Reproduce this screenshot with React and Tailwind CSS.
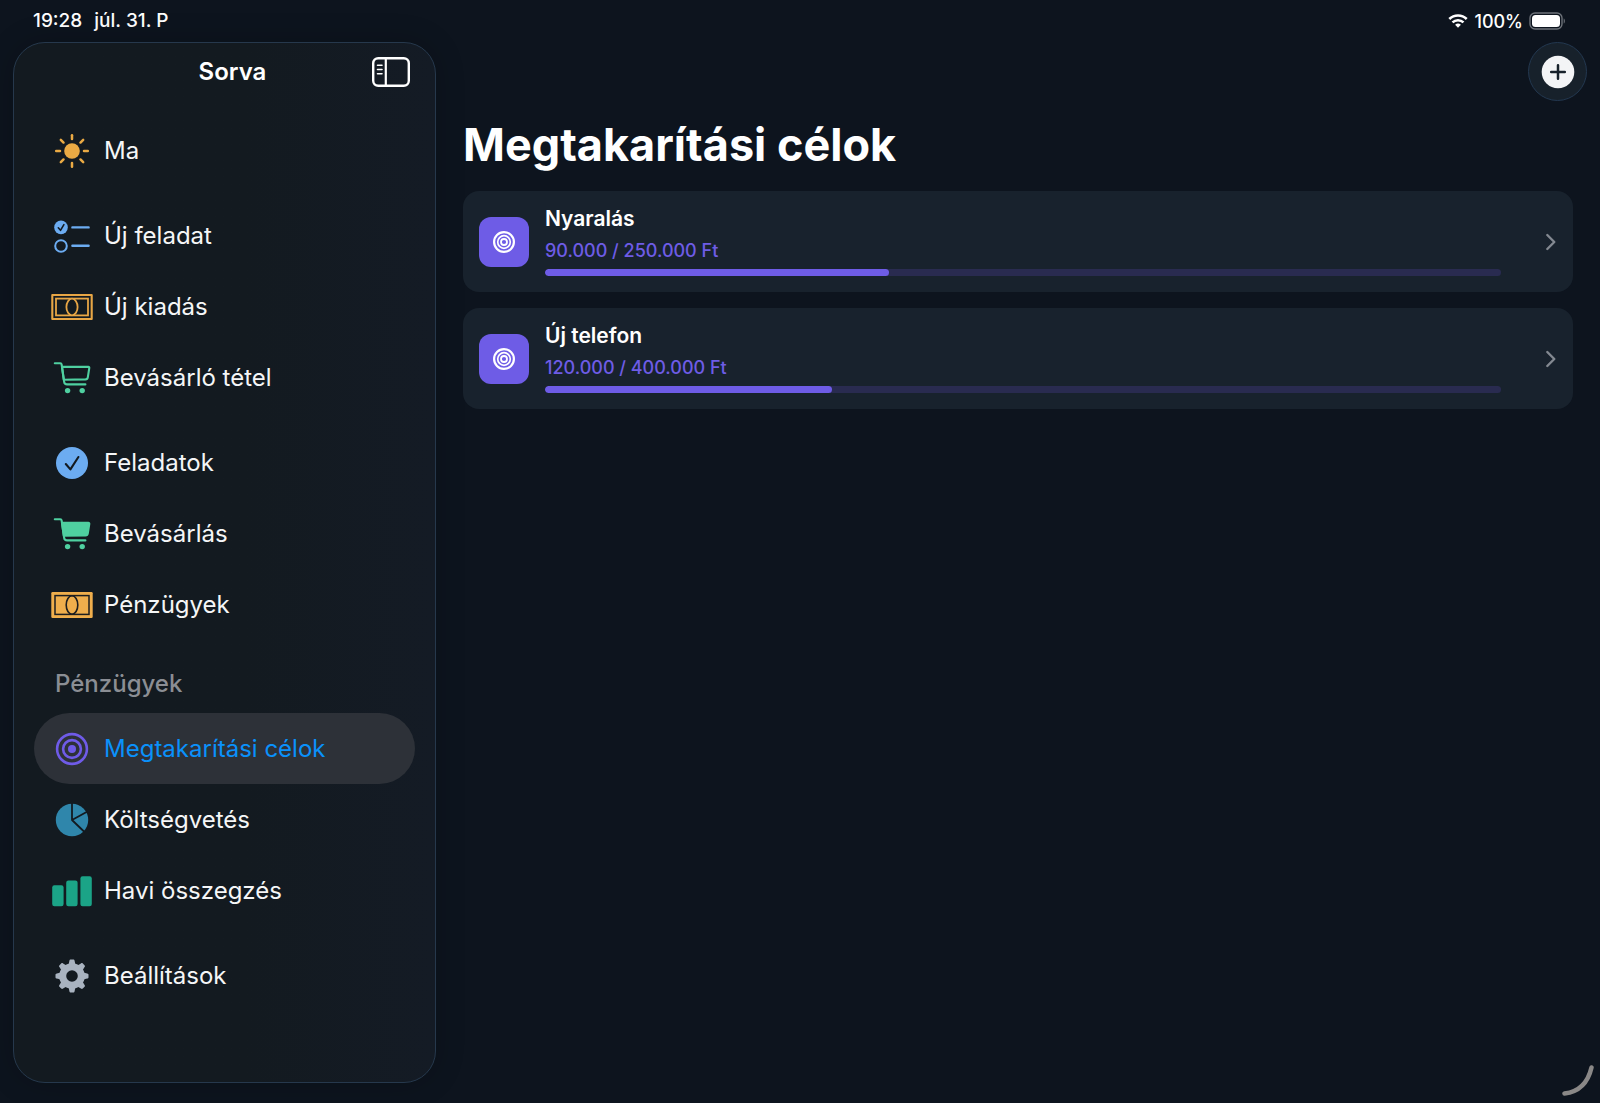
import React from "react";

function Icon({ children, className = "h-10 w-11" }) {
  return (
    <svg viewBox="0 0 44 40" fill="none" aria-hidden="true" className={className} strokeLinecap="round" strokeLinejoin="round">
      {children}
    </svg>
  );
}

function SunIcon() {
  return (
    <Icon>
      <circle cx="22" cy="20" r="7.8" fill="#eaaa44" />
      {[0, 45, 90, 135, 180, 225, 270, 315].map((a) => (
        <path key={a} d="M22 4.2V8" stroke="#eaaa44" strokeWidth="2.5" transform={`rotate(${a} 22 20)`} />
      ))}
    </Icon>
  );
}

function ChecklistIcon() {
  return (
    <Icon>
      <circle cx="11" cy="11.4" r="6.8" fill="#6cacf1" />
      <path d="M8.3 11.8l2.2 2.5 3.4-5.6" stroke="#131a20" strokeWidth="1.6" />
      <circle cx="11" cy="30" r="5.8" stroke="#6cacf1" strokeWidth="2" />
      <path d="M22.4 11.4h16.2M22.4 29.8h16.2" stroke="#6cacf1" strokeWidth="2.4" />
    </Icon>
  );
}

function BanknoteIcon({ filled }) {
  return (
    <Icon>
      {filled ? (
        <>
          <rect x="1.3" y="7" width="41.4" height="26" rx="1.2" fill="#efae4c" />
          <rect x="5" y="10.6" width="34" height="18.8" stroke="#1d1e1f" strokeWidth="1.5" strokeLinejoin="miter" />
          <ellipse cx="22" cy="20" rx="5.8" ry="9.2" stroke="#1d1e1f" strokeWidth="1.6" />
        </>
      ) : (
        <>
          <rect x="2.3" y="8" width="39.4" height="24" stroke="#e8a645" strokeWidth="2.1" />
          <rect x="6" y="11.6" width="32" height="16.8" stroke="#e8a645" strokeWidth="1.8" strokeLinejoin="miter" />
          <ellipse cx="22" cy="20" rx="5.6" ry="8.3" fill="#131a20" stroke="#e8a645" strokeWidth="1.8" />
        </>
      )}
    </Icon>
  );
}

function CartIcon({ filled }) {
  return (
    <Icon>
      <path
        d="M4.8 5.2h5.4c.9 0 1.3.4 1.4 1.2l2.5 17.2c.2 1.8 1.1 2.8 3 2.8h18.3"
        stroke="#4fd0a0"
        strokeWidth="2.1"
      />
      <path
        d="M12 8.9h26.4c.7 0 1 .4.9 1l-1.5 9.4c-.2 1.3-.9 2-2.3 2.1l-21.7 .3z"
        fill={filled ? "#4fd0a0" : "none"}
        stroke="#4fd0a0"
        strokeWidth="2.1"
      />
      <circle cx="17.6" cy="32.6" r="2.7" fill="#4fd0a0" />
      <circle cx="32.2" cy="32.6" r="2.7" fill="#4fd0a0" />
    </Icon>
  );
}

function CheckCircleIcon() {
  return (
    <Icon>
      <circle cx="22" cy="20" r="16" fill="#6cacf1" />
      <path d="M15.8 21l4.6 5.4 8-12.4" stroke="#131a20" strokeWidth="2.1" />
    </Icon>
  );
}

function TargetIcon() {
  return (
    <Icon>
      <circle cx="22" cy="20" r="14.9" stroke="#6f5be8" strokeWidth="2.6" />
      <circle cx="22" cy="20" r="8.9" stroke="#6f5be8" strokeWidth="2.6" />
      <circle cx="22" cy="20" r="4" fill="#6f5be8" />
    </Icon>
  );
}

function PieIcon() {
  return (
    <Icon>
      <circle cx="22" cy="20" r="16.2" fill="#2f86ab" />
      <path d="M22 3v17L34.5 32M22 20l15.5-8.5" stroke="#131a20" strokeWidth="1.8" strokeLinecap="butt" />
    </Icon>
  );
}

function BarsIcon() {
  return (
    <Icon>
      <rect x="2.2" y="14.2" width="11.4" height="21" rx="2.2" fill="#1ba487" />
      <rect x="16.2" y="9.6" width="11.4" height="25.6" rx="2.2" fill="#1ba487" />
      <rect x="30.4" y="5.2" width="11.4" height="30" rx="2.2" fill="#1ba487" />
    </Icon>
  );
}

function GearIcon() {
  return (
    <Icon>
      <circle cx="22" cy="20" r="9.3" stroke="#a9b3c0" strokeWidth="7" />
      {[0, 45, 90, 135, 180, 225, 270, 315].map((a) => (
        <path
          key={a}
          d="M17 9.5l1.8-1.7 .6-3c.1-.8.6-1.3 1.4-1.3h2.4c.8 0 1.3.5 1.4 1.3l.6 3 1.8 1.7z"
          fill="#a9b3c0"
          transform={`rotate(${a} 22 20)`}
        />
      ))}
    </Icon>
  );
}

function GoalGlyph() {
  return (
    <svg viewBox="0 0 24 24" fill="none" stroke="#fff" aria-hidden="true" className="size-6">
      <circle cx="12" cy="12" r="9.9" strokeWidth="2.2" />
      <circle cx="12" cy="12" r="6.3" strokeWidth="1.7" />
      <circle cx="12" cy="12" r="3" strokeWidth="1.8" />
    </svg>
  );
}

const groups = [
  { id: "today", items: [{ label: "Ma", icon: <SunIcon /> }] },
  {
    id: "create",
    items: [
      { label: "Új feladat", icon: <ChecklistIcon /> },
      { label: "Új kiadás", icon: <BanknoteIcon /> },
      { label: "Bevásárló tétel", icon: <CartIcon /> },
    ],
  },
  {
    id: "areas",
    items: [
      { label: "Feladatok", icon: <CheckCircleIcon /> },
      { label: "Bevásárlás", icon: <CartIcon filled /> },
      { label: "Pénzügyek", icon: <BanknoteIcon filled /> },
    ],
  },
  {
    id: "finance",
    title: "Pénzügyek",
    items: [
      { label: "Megtakarítási célok", icon: <TargetIcon />, active: true },
      { label: "Költségvetés", icon: <PieIcon /> },
      { label: "Havi összegzés", icon: <BarsIcon /> },
    ],
  },
  { id: "settings", items: [{ label: "Beállítások", icon: <GearIcon /> }] },
];

const goals = [
  { name: "Nyaralás", amount: "90.000 / 250.000 Ft", percent: 36 },
  { name: "Új telefon", amount: "120.000 / 400.000 Ft", percent: 30 },
];

function NavItem({ label, icon, active }) {
  return (
    <li>
      <a
        href="#"
        aria-current={active ? "page" : undefined}
        className={
          "flex h-[71px] items-center gap-2.5 rounded-[36px] pl-4 text-[24px] " +
          (active ? "bg-[#2d3138] text-[#0a91fb]" : "text-[#f5f6f7]")
        }
      >
        {icon}
        <span>{label}</span>
      </a>
    </li>
  );
}

function StatusBar() {
  return (
    <div className="flex h-[42px] items-center justify-between pr-[34px] pl-[33px] font-medium">
      <div className="flex gap-3 text-[19px]">
        <span>19:28</span>
        <span>júl. 31. P</span>
      </div>
      <div className="flex items-center gap-1.5 text-[18px]">
        <svg viewBox="0 0 20 16" fill="none" stroke="#fff" aria-hidden="true" className="h-4 w-5">
          <path d="M1.3 6a12.4 12.4 0 0 1 17.4 0" strokeWidth="2.6" />
          <path d="M4.5 9.4a7.8 7.8 0 0 1 11 0" strokeWidth="2.5" />
          <path d="M10 14.8l-2.9-3a4.2 4.2 0 0 1 5.800 0z" fill="#fff" stroke="none" />
        </svg>
        <span>100%</span>
        <svg viewBox="0 0 37 18" fill="none" aria-hidden="true" className="h-[18px] w-[37px]">
          <rect x="1" y="1" width="32" height="16" rx="5" stroke="#6d7279" strokeWidth="1.4" />
          <rect x="3" y="3" width="28" height="12" rx="3.5" fill="#fff" />
          <path d="M34.7 6.5v5c1.6-.6 1.6-4.4 0-5z" fill="#6d7279" />
        </svg>
      </div>
    </div>
  );
}

function Sidebar() {
  return (
    <aside className="flex w-[423px] shrink-0 flex-col rounded-[32px] border border-[#26384c] bg-linear-to-r from-[#131a20] from-55% to-[#141b25] px-5 shadow-[0_0_30px_rgba(0,0,0,0.2)]">
      <div className="grid h-[72px] grid-cols-[1fr_auto_1fr] items-start pt-3.5">
        <h2 className="col-start-2 pl-4 text-[24px] leading-[30px] font-semibold">Sorva</h2>
        <button type="button" aria-label="Oldalsáv elrejtése" className="mr-1 justify-self-end">
          <svg viewBox="0 0 40 30" fill="none" stroke="#fff" aria-hidden="true" className="h-[30px] w-10">
            <rect x="2.200" y="1.200" width="35.600" height="27.600" rx="5" strokeWidth="2.400" />
            <path d="M14.800 1v28" strokeWidth="2.200" />
            <path d="M6.500 8.200h4.500M6.500 12.500h4.500M6.500 16.700h4.500" strokeWidth="1.600" strokeLinecap="round" />
          </svg>
        </button>
      </div>
      <nav className="flex flex-col gap-3.5">
        {groups.map((group) => (
          <section key={group.id}>
            {group.title && (
              <h3 className="flex h-[59px] items-center pl-[21px] text-[24px] font-medium text-[#8b8e94]">{group.title}</h3>
            )}
            <ul>
              {group.items.map((item) => (
                <NavItem key={item.label} {...item} />
              ))}
            </ul>
          </section>
        ))}
      </nav>
    </aside>
  );
}

function GoalCard({ name, amount, percent }) {
  return (
    <li>
      <a href="#" className="flex h-[101px] items-center rounded-2xl bg-[#18222d] px-4">
        <span className="flex size-[50px] shrink-0 items-center justify-center rounded-xl bg-[#6e5ce6]">
          <GoalGlyph />
        </span>
        <span className="ml-4 flex flex-1 flex-col pb-1">
          <span className="text-[21px] leading-8 font-semibold">{name}</span>
          <span className="text-[18px] leading-8 font-medium text-[#6e5ce6]">{amount}</span>
          <span
            role="progressbar"
            aria-label={name}
            aria-valuenow={percent}
            aria-valuemin={0}
            aria-valuemax={100}
            className="mt-0.5 block h-[7px] overflow-hidden rounded-full bg-[#292b50]"
          >
            <span className="block h-full rounded-full bg-[#6e5ce6]" style={{ width: `${percent}%` }} />
          </span>
        </span>
        <svg viewBox="0 0 12 18" fill="none" stroke="#838991" strokeWidth="2.4" strokeLinecap="round" strokeLinejoin="round" aria-hidden="true" className="ml-11 h-[18px] w-3">
          <path d="M2.300 2l7 7-7 7" />
        </svg>
      </a>
    </li>
  );
}

export default function App() {
  return (
    <div className="relative flex min-h-screen flex-col bg-[#0d141e] font-['Inter','Noto_Sans',sans-serif] text-white">
      <StatusBar />
      <div className="flex flex-1 gap-[27px] pb-5 pl-[13px]">
        <Sidebar />
        <main className="min-w-0 flex-1">
          <div className="flex justify-end pr-[13px]">
            <button
              type="button"
              aria-label="Új cél"
              className="flex size-[59px] items-center justify-center rounded-full border border-[#233850] bg-[#17212b]"
            >
              <svg viewBox="0 0 34 34" fill="none" aria-hidden="true" className="size-[34px]">
                <circle cx="17" cy="17" r="16.300" fill="#f3f4f6" />
                <path d="M17 10.200v13.600M10.200 17h13.600" stroke="#17212b" strokeWidth="2.500" strokeLinecap="round" />
              </svg>
            </button>
          </div>
          <div className="pr-[27px]">
            <h1 className="pt-4 text-[45px] leading-[56px] font-bold">Megtakarítási célok</h1>
            <ul className="mt-[18px] flex flex-col gap-4">
              {goals.map((goal) => (
                <GoalCard key={goal.name} {...goal} />
              ))}
            </ul>
          </div>
        </main>
      </div>
      <svg viewBox="0 0 34 34" fill="none" aria-hidden="true" className="absolute right-1.5 bottom-1.5 size-[34px]">
        <path d="M4.500 30.500Q26 28 31.500 4.500" stroke="#8a8887" strokeWidth="4.500" strokeLinecap="round" />
      </svg>
    </div>
  );
}
